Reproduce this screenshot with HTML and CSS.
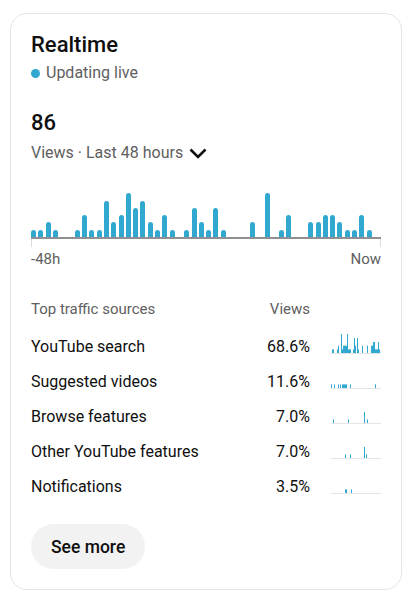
FILE: index.html
```html
<!DOCTYPE html>
<html>
<head>
<meta charset="utf-8">
<link rel="stylesheet" href="styles.css">
</head>
<body>
<div class="card">
  <div class="title">Realtime</div>
  <div class="live"><span class="dot"></span>Updating live</div>
  <div class="count">86</div>
  <div class="range">Views · Last 48 hours
    <svg class="chev" width="18" height="11" viewBox="0 0 18 11"><polyline points="1.5,1.5 9,9 16.5,1.5" fill="none" stroke="#0f0f0f" stroke-width="2.6"/></svg>
  </div>
  <div class="chart" id="chart"></div>
  <div class="axis"><span>-48h</span><span>Now</span></div>

  <div class="table">
    <div class="th">Top traffic sources</div>
    <div class="th num">Views</div>
    <div></div>

    <div class="td">YouTube search</div>
    <div class="td num">68.6%</div>
    <svg class="spark" viewBox="0 0 50 35" width="50" height="35">
      <rect class="base" x="0" y="24" width="50" height="1"/>
      <g class="b">
        <rect x="1" y="20.4" width="2" height="3.6"/>
        <rect x="6" y="20.4" width="2" height="3.6"/>
        <rect x="7" y="16.7" width="1" height="7.3"/>
        <rect x="10" y="5" width="1" height="19"/>
        <rect x="10" y="20.4" width="10" height="3.6"/>
        <rect x="12" y="16.7" width="4" height="7.3"/>
        <rect x="16" y="5" width="1" height="19"/>
        <rect x="22" y="20.4" width="3" height="3.6"/>
        <rect x="23" y="9" width="1" height="15"/>
        <rect x="24" y="16.7" width="1" height="7.3"/>
        <rect x="26" y="9" width="1" height="15"/>
        <rect x="26" y="20.4" width="2" height="3.6"/>
        <rect x="31" y="16.7" width="1" height="7.3"/>
        <rect x="36" y="16.7" width="1" height="7.3"/>
        <rect x="40" y="20.4" width="9" height="3.6"/>
        <rect x="40" y="16.7" width="4" height="7.3"/>
        <rect x="42" y="13" width="2" height="11"/>
        <rect x="47" y="13" width="1" height="11"/>
      </g>
    </svg>

    <div class="td">Suggested videos</div>
    <div class="td num">11.6%</div>
    <svg class="spark" viewBox="0 0 50 35" width="50" height="35">
      <rect class="base" x="0" y="24" width="50" height="1"/>
      <g class="b">
        <rect x="0" y="20.4" width="1" height="3.6"/>
        <rect x="3" y="20.4" width="1" height="3.6"/>
        <rect x="7" y="20.4" width="1" height="3.6"/>
        <rect x="9" y="20.4" width="1" height="3.6"/>
        <rect x="11" y="20.4" width="5" height="3.6"/>
        <rect x="19" y="20.4" width="1" height="3.6"/>
        <rect x="44" y="20.4" width="1" height="3.6"/>
      </g>
    </svg>

    <div class="td">Browse features</div>
    <div class="td num">7.0%</div>
    <svg class="spark" viewBox="0 0 50 35" width="50" height="35">
      <rect class="base" x="0" y="24" width="50" height="1"/>
      <g class="b">
        <rect x="2" y="20.4" width="1" height="3.6"/>
        <rect x="17" y="20.4" width="1" height="3.6"/>
        <rect x="33" y="13" width="1" height="11"/>
        <rect x="36" y="20.4" width="1" height="3.6"/>
      </g>
    </svg>

    <div class="td">Other YouTube features</div>
    <div class="td num">7.0%</div>
    <svg class="spark" viewBox="0 0 50 35" width="50" height="35">
      <rect class="base" x="0" y="24" width="50" height="1"/>
      <g class="b">
        <rect x="14" y="20.4" width="1" height="3.6"/>
        <rect x="19" y="20.4" width="1" height="3.6"/>
        <rect x="33" y="13" width="1" height="11"/>
        <rect x="35" y="20.4" width="1" height="3.6"/>
      </g>
    </svg>

    <div class="td">Notifications</div>
    <div class="td num">3.5%</div>
    <svg class="spark" viewBox="0 0 50 35" width="50" height="35">
      <rect class="base" x="0" y="24" width="50" height="1"/>
      <g class="b">
        <rect x="14" y="20.4" width="2" height="3.6"/>
        <rect x="20" y="20.4" width="1" height="3.6"/>
      </g>
    </svg>
  </div>

  <button class="more">See more</button>
</div>
<script>
  var h = [1,1,2,1,0,0,1,3,1,1,5,2,3,6,4,5,2,1,3,1,0,1,4,2,1,4,1,0,0,0,2,0,6,0,1,3,0,0,2,2,3,3,2,1,1,3,1,0];
  var c = document.getElementById('chart');
  h.forEach(function(v){
    var s = document.createElement('div');
    s.className = 'slot';
    if (v > 0) {
      var b = document.createElement('div');
      b.className = 'bar';
      b.style.height = (v * 7.27) + 'px';
      s.appendChild(b);
    }
    c.appendChild(s);
  });
</script>
</body>
</html>
```

FILE: styles.css
```css
* { box-sizing: border-box; }
html, body { margin: 0; padding: 0; background: #fff; }
body { font-family: Roboto, "Liberation Sans", Arial, sans-serif; color: #0f0f0f; }

.card {
  margin: 13px 0 0 10px;
  width: 392px;
  height: 577px;
  border: 1px solid #e5e5e5;
  border-radius: 17px;
  padding: 17px 20px 20px;
}

.title { font-size: 22px; font-weight: 500; line-height: 28px; }

.live {
  margin-top: 4px;
  font-size: 16px;
  line-height: 20px;
  color: #606060;
  display: flex;
  align-items: center;
}
.dot {
  width: 9px; height: 9px; border-radius: 50%;
  background: #30a8d0;
  margin-right: 6px;
}

.count { margin-top: 26px; font-size: 22px; font-weight: 500; line-height: 28px; }

.range {
  margin-top: 6px;
  font-size: 16px;
  line-height: 20px;
  color: #606060;
  display: flex;
  align-items: center;
}
.chev { margin-left: 6px; }

.chart {
  margin-top: 30px;
  height: 46px;
  display: flex;
  align-items: flex-end;
  border-bottom: 2px solid #909090;
}
.slot { flex: 1 1 0; display: flex; align-items: flex-end; }
.bar { width: 5px; background: #30a8d0; border-radius: 2.5px 2.5px 0 0; }

.axis {
  display: flex;
  justify-content: space-between;
  font-size: 15px;
  line-height: 20px;
  color: #606060;
  padding-top: 10px;
  position: relative;
}
.axis::before, .axis::after {
  content: "";
  position: absolute;
  top: 0;
  width: 1px;
  height: 8px;
  background: #dcdcdc;
}
.axis::before { left: 0; }
.axis::after { right: 0; }

.table {
  margin-top: 30px;
  display: grid;
  grid-template-columns: 1fr auto 50px;
  column-gap: 21px;
  align-items: center;
}
.th { font-size: 15px; line-height: 20px; color: #606060; margin-bottom: 10px; }
.td { font-size: 16px; line-height: 35px; }
.num { text-align: right; }
.spark { display: block; }
.spark .base { fill: #e5e5e5; }
.spark .b rect { fill: #30a8d0; }

.more {
  margin-top: 20px;
  height: 45px;
  padding: 0 20px;
  border: none;
  border-radius: 23px;
  background: #f2f2f2;
  font-family: Roboto, "Liberation Sans", Arial, sans-serif;
  font-size: 17.5px;
  font-weight: 500;
  color: #0f0f0f;
}
```
